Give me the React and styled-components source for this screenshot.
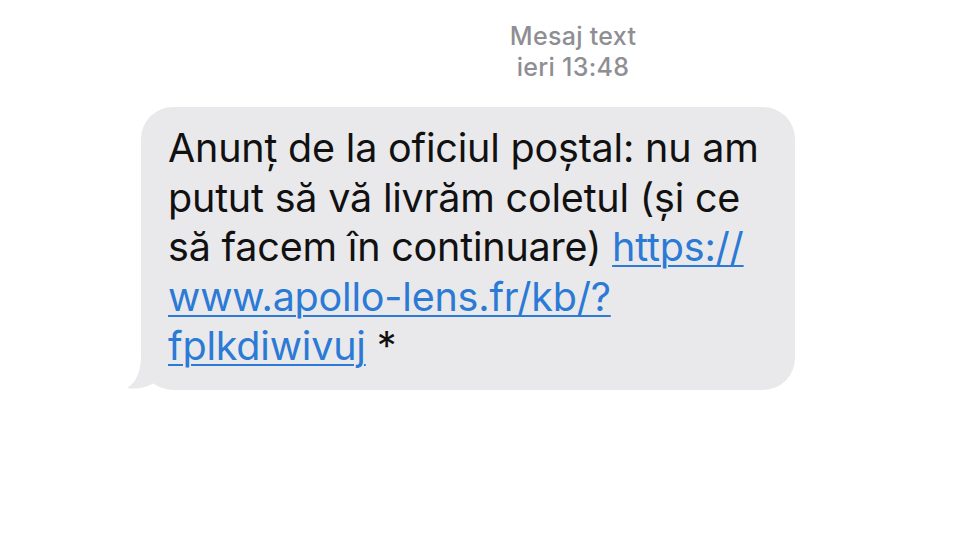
import styled, { createGlobalStyle } from 'styled-components'

const GlobalStyle = createGlobalStyle`
  html, body {
    margin: 0;
    padding: 0;
    background: #ffffff;
  }
  body {
    font-family: Inter, 'Noto Sans', 'Liberation Sans', sans-serif;
  }
`

const Screen = styled.div`
  width: 960px;
  height: 540px;
  display: flex;
  flex-direction: column;
  background: #fff;
  overflow: hidden;
`

const Header = styled.div`
  padding: 21px 0 0 186px;
  display: flex;
  flex-direction: column;
  align-items: center;
  color: #8e8e93;
  font-size: 25px;
  line-height: 31px;
  font-weight: 500;
  letter-spacing: 0.3px;
`

const Thread = styled.div`
  padding: 24px 0 0 141px;
`

const Bubble = styled.div`
  position: relative;
  width: 654px;
  box-sizing: border-box;
  padding: 17px 10px 18px 27px;
  background: #e9e9eb;
  border-radius: 32px;
  color: #111;
  font-size: 39.5px;
  line-height: 49.5px;
  letter-spacing: -0.2px;
  white-space: nowrap;
`

const Tail = styled.svg`
  position: absolute;
  left: -14px;
  bottom: 0;
  width: 40px;
  height: 34px;
`

const Link = styled.a`
  color: #2b7ad6;
  text-decoration: underline;
  text-decoration-thickness: 2px;
  text-underline-offset: 4px;
`

export default function App() {
  return (
    <Screen>
      <GlobalStyle />
      <Header>
        <span>Mesaj text</span>
        <span>ieri 13:48</span>
      </Header>
      <Thread>
        <Bubble>
          <Tail viewBox="0 0 40 34">
            <path d="M14 0 C14 14 10 26 0 32 C10 34 22 31 30 25 L40 25 L40 0 Z" fill="#e9e9eb" />
          </Tail>
          Anunț de la oficiul poștal: nu am
          <br />
          putut să vă livrăm coletul (și ce
          <br />
          să facem în continuare) <Link>https://</Link>
          <br />
          <Link>www.apollo-lens.fr/kb/?</Link>
          <br />
          <Link>fplkdiwivuj</Link> *
        </Bubble>
      </Thread>
    </Screen>
  )
}
